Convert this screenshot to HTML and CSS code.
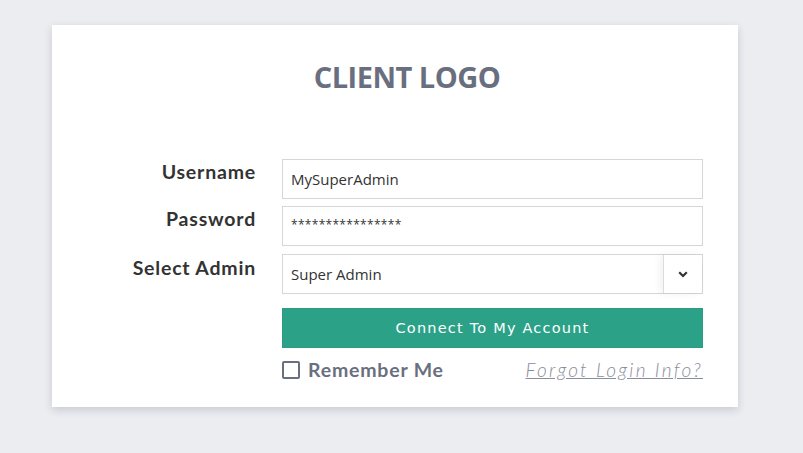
FILE: index.html
```html
<!DOCTYPE html>
<html>
<head>
<meta charset="utf-8">
<link rel="stylesheet" href="styles.css">
</head>
<body>
<div class="card">
  <h1 class="logo">CLIENT LOGO</h1>
  <form class="form">
    <label class="label">Username</label>
    <div class="field"><span class="value">MySuperAdmin</span></div>
    <label class="label">Password</label>
    <div class="field"><span class="value pw">****************</span></div>
    <label class="label label-select">Select Admin</label>
    <div class="field select"><span class="value">Super Admin</span>
      <span class="chev"><svg width="10" height="7" viewBox="0 0 10 7"><path d="M1.2 1.3 L5 5 L8.8 1.3" fill="none" stroke="#333" stroke-width="2.2"/></svg></span>
    </div>
    <span></span>
    <button type="button" class="btn">Connect To My Account</button>
    <span></span>
    <div class="extra">
      <label class="remember"><span class="box"></span>Remember Me</label>
      <a class="forgot">Forgot Login Info?</a>
    </div>
  </form>
</div>
</body>
</html>
```
FILE: styles.css
```css
html, body { margin: 0; padding: 0; }
body {
  background: #ecedf1;
  width: 803px;
  height: 453px;
  overflow: hidden;
  font-family: "Open Sans", "DejaVu Sans", sans-serif;
}
.card {
  margin: 25px 0 0 52px;
  width: 686px;
  height: 382px;
  box-sizing: border-box;
  background: #fff;
  box-shadow: 0 3px 8px rgba(40, 44, 60, 0.18);
  padding-top: 32px;
}
.logo {
  margin: 0;
  padding-left: 24px;
  text-align: center;
  font-family: "Open Sans", sans-serif;
  font-weight: 700;
  font-size: 29px;
  line-height: 40px;
  color: #6a6f80;
  letter-spacing: -0.5px;
}
.form {
  margin-top: 62px;
  display: grid;
  grid-template-columns: 204px 421px;
  column-gap: 26px;
  row-gap: 7px;
}
.label {
  text-align: right;
  font-family: "Lato", sans-serif;
  font-weight: 700;
  font-size: 19.5px;
  line-height: 26px;
  letter-spacing: 0.8px;
  color: #333;
  margin-top: 0;
}
.label-select { margin-top: 2px; }
.field {
  height: 40px;
  box-sizing: border-box;
  border: 1px solid #d6d6d6;
  display: flex;
  align-items: center;
  padding-left: 8px;
  font-family: "Open Sans", sans-serif;
  font-size: 15px;
  color: #333;
}
.field .pw { font-size: 12px; letter-spacing: 0.3px; margin-top: -3px; }
.select { margin-top: 1px; padding-right: 0; }
.select .value { flex: 1; }
.chev {
  width: 38px;
  height: 38px;
  border-left: 1px solid #dcdcdc;
  display: flex;
  align-items: center;
  justify-content: center;
  box-shadow: -3px 0 8px rgba(0, 0, 0, 0.06);
}
.btn {
  margin-top: 7px;
  height: 40px;
  border: 1px solid #2a9d85;
  background: #2ba288;
  color: #fff;
  font-family: "DejaVu Sans", sans-serif;
  font-size: 14.5px;
  letter-spacing: 1.2px;
  cursor: pointer;
}
.extra {
  margin-top: 3px;
  display: flex;
  justify-content: space-between;
  align-items: center;
}
.remember {
  display: flex;
  align-items: center;
  font-family: "Lato", sans-serif;
  font-weight: 700;
  font-size: 19.5px;
  letter-spacing: 0.8px;
  color: #6a6f80;
}
.box {
  width: 14px;
  height: 14px;
  border: 2px solid #6a6f80;
  border-radius: 2px;
  margin-right: 8px;
}
.forgot {
  font-family: "Lato", sans-serif;
  font-style: italic;
  font-weight: 300;
  font-size: 19px;
  letter-spacing: 2.3px;
  color: #8a8d9a;
  text-decoration: underline;
}
```
